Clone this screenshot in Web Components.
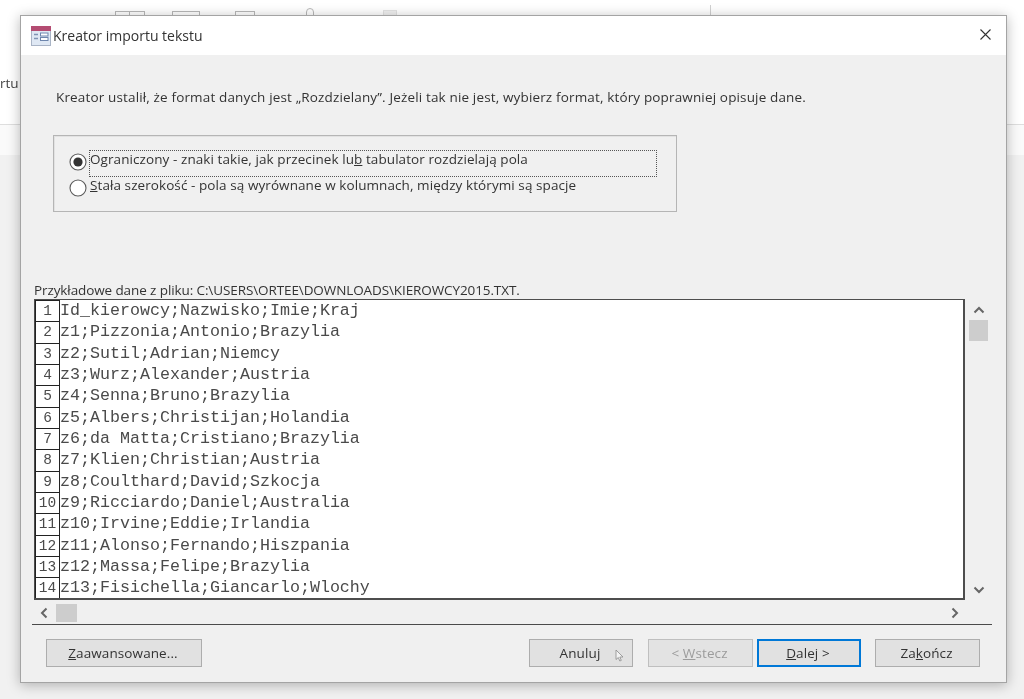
<!DOCTYPE html>
<html lang="pl">
<head>
<meta charset="utf-8">
<title>Kreator importu tekstu</title>
<style>
  html,body{margin:0;height:699px;overflow:hidden;background:#f1f1f1}
  body{font-family:"Open Sans","Noto Sans",sans-serif;color:#333;filter:blur(.35px)}
</style>
</head>
<body>
<app-backdrop></app-backdrop>
<import-dialog heading="Kreator importu tekstu">
  <p slot="intro">Kreator ustalił, że format danych jest „Rozdzielany”. Jeżeli tak nie jest, wybierz format, który poprawniej opisuje dane.</p>
  <group-box slot="format">
    <radio-row checked focused>Ograniczony - znaki takie, jak przecinek lu<u>b</u> tabulator rozdzielają pola</radio-row>
    <radio-row><u>S</u>tała szerokość - pola są wyrównane w kolumnach, między którymi są spacje</radio-row>
  </group-box>
  <sample-table slot="sample" caption="Przykładowe dane z pliku: C:\USERS\ORTEE\DOWNLOADS\KIEROWCY2015.TXT."></sample-table>
  <wizard-button slot="left" w="156"><u>Z</u>aawansowane...</wizard-button>
  <wizard-button slot="right" w="104" pointer>Anuluj</wizard-button>
  <wizard-button slot="right" w="105" disabled style="margin-left:15px">&lt; <u>W</u>stecz</wizard-button>
  <wizard-button slot="right" w="104" primary style="margin-left:4px"><u>D</u>alej &gt;</wizard-button>
  <wizard-button slot="right" w="105" style="margin-left:14px">Za<u>k</u>ończ</wizard-button>
</import-dialog>

<script>
const ROWS = [
  "Id_kierowcy;Nazwisko;Imie;Kraj",
  "z1;Pizzonia;Antonio;Brazylia",
  "z2;Sutil;Adrian;Niemcy",
  "z3;Wurz;Alexander;Austria",
  "z4;Senna;Bruno;Brazylia",
  "z5;Albers;Christijan;Holandia",
  "z6;da Matta;Cristiano;Brazylia",
  "z7;Klien;Christian;Austria",
  "z8;Coulthard;David;Szkocja",
  "z9;Ricciardo;Daniel;Australia",
  "z10;Irvine;Eddie;Irlandia",
  "z11;Alonso;Fernando;Hiszpania",
  "z12;Massa;Felipe;Brazylia",
  "z13;Fisichella;Giancarlo;Wlochy"
];

// the Access window behind the dialog, mostly hidden
class AppBackdrop extends HTMLElement {
  constructor() {
    super();
    this.attachShadow({ mode: "open" }).innerHTML = `
      <style>
        :host{display:block;height:699px;background:#f1f1f1}
        .ribbon{position:relative;height:124px;background:#fff;border-bottom:1px solid #dedede;overflow:hidden}
        .band{height:30px;background:#fafafa}
        .ico{position:absolute;top:11px;height:8px;border:1px solid #b8b8b8;box-sizing:border-box}
        .sep{position:absolute;left:710px;top:5px;width:1px;height:14px;background:#d0d0d0}
        .cut{position:absolute;left:0;top:74px;font-size:13.5px;line-height:18px;color:#444}
      </style>
      <div class="ribbon">
        <div class="ico" style="left:115px;width:15px"></div>
        <div class="ico" style="left:129px;width:16px"></div>
        <div class="ico" style="left:172px;width:28px"></div>
        <div class="ico" style="left:235px;width:20px"></div>
        <div class="ico" style="left:306px;top:8px;width:8px;border-radius:4px 4px 0 0"></div>
        <div class="ico" style="left:383px;top:10px;width:14px;border-color:#e2e2e2;background:#f0f0f0"></div>
        <div class="sep"></div>
        <div class="cut">rtu</div>
      </div>
      <div class="band"></div>`;
  }
}

class ImportDialog extends HTMLElement {
  constructor() {
    super();
    this.attachShadow({ mode: "open" }).innerHTML = `
      <style>
        :host{position:absolute;left:20px;top:15px;width:987px;height:668px;box-sizing:border-box;display:flex;flex-direction:column;
          background:#f0f0f0;border:1px solid #a4a4a4;box-shadow:0 2px 12px rgba(0,0,0,.28)}
        .title{height:39px;flex:none;background:#fff;display:flex;align-items:center;padding:0 14px 0 10px;font-size:14px;color:#333}
        .title svg{display:block;margin-right:2px}
        .title svg.x{margin:-2px 0 0}
        .title span{flex:1}
        .body{flex:1;display:flex;flex-direction:column}
        ::slotted(p){margin:32px 0 28px 35px;font-size:13.5px;letter-spacing:.15px;line-height:20px;font-weight:500;color:#333}
        .rule{height:1px;background:#4a4a4a;margin:2px 14px 14px 11px}
        .actions{display:flex;justify-content:space-between;padding:0 26px 0 25px}
        .right{display:flex}
      </style>
      <div class="title">
        <svg width="20" height="20" viewBox="0 0 20 20">
          <rect x=".5" y=".5" width="19" height="19" fill="#dfe8f4" stroke="#a9b4c6"/>
          <rect x="0" y="0" width="20" height="5" fill="#b44c72"/>
          <path d="M3 8.500h4M3 12.500h4" stroke="#7f93b4" stroke-width="1.4"/>
          <rect x="9.500" y="7" width="7.500" height="3" fill="#fff" stroke="#6e86ad"/>
          <rect x="9.500" y="11.500" width="7.500" height="3" fill="#fff" stroke="#6e86ad"/>
        </svg>
        <span></span>
        <svg class="x" width="13" height="13" viewBox="0 0 13 13"><path d="M1.500 1.500l10 10M11.500 1.500l-10 10" stroke="#333" stroke-width="1.1" fill="none"/></svg>
      </div>
      <div class="body">
        <slot name="intro"></slot>
        <slot name="format"></slot>
        <slot name="sample"></slot>
        <div class="rule"></div>
        <div class="actions">
          <slot name="left"></slot>
          <div class="right"><slot name="right"></slot></div>
        </div>
      </div>`;
  }
  connectedCallback() {
    this.shadowRoot.querySelector(".title span").textContent = this.getAttribute("heading");
  }
}

class GroupBox extends HTMLElement {
  constructor() {
    super();
    this.attachShadow({ mode: "open" }).innerHTML = `
      <style>
        :host{display:block;box-sizing:border-box;width:624px;height:77px;margin-left:32px;padding:14px 19px 0 15px;
          border:1px solid #b5b5b5;box-shadow:1px 1px 0 #e2e2e2 inset}
        ::slotted(:not(:first-child)){margin-top:-1px}
      </style>
      <slot></slot>`;
  }
}

class RadioRow extends HTMLElement {
  constructor() {
    super();
    this.attachShadow({ mode: "open" }).innerHTML = `
      <style>
        :host{display:flex;align-items:flex-start;font-size:13.5px;letter-spacing:.08px;line-height:16px;color:#333;font-weight:500}
        svg{flex:none;margin-top:3px;display:block}
        .label{flex:1;box-sizing:border-box;height:27px;margin-left:2px;border:1px dotted transparent}
        :host([focused]) .label{border-color:#555}
        :host(:not([focused])) .label{height:24px}
      </style>
      <svg width="18" height="18" viewBox="0 0 18 18">
        <circle cx="9" cy="9" r="8" fill="#fff" stroke="#5a5a5a" stroke-width="1.1"/>
        <circle class="dot" cx="9" cy="9" r="4.600" fill="#333"/>
      </svg>
      <div class="label"><slot></slot></div>`;
  }
  connectedCallback() {
    if (!this.hasAttribute("checked")) this.shadowRoot.querySelector(".dot").remove();
  }
}

class SampleTable extends HTMLElement {
  constructor() {
    super();
    this.attachShadow({ mode: "open" }).innerHTML = `
      <style>
        :host{display:block;margin:69px 0 0 13px}
        .cap{font-size:13.5px;line-height:18px;color:#333;letter-spacing:-.1px;font-weight:500}
        .main{display:flex}
        .box{box-sizing:border-box;width:931px;height:301px;background:#fff;border:2px solid #4d4d4d;border-width:1px 2px 2px 1px;
          display:grid;grid-template-columns:25px 1fr;grid-auto-rows:21.35px;overflow:hidden;
          font-family:"Liberation Mono","Courier New",monospace;font-size:16.67px;color:#4a4a4a}
        .n{box-sizing:border-box;border:1px solid #222;margin-bottom:-1px;text-align:center;font-size:14.5px;line-height:21px}
        .r{white-space:pre;line-height:22px}
        .vbar{width:19px;margin-left:4px;display:flex;flex-direction:column;align-items:center}
        .vbar .up{margin-top:7px}
        .vbar .thumb{width:19px;height:21px;background:#cdcdcd;margin-top:6px}
        .vbar .down{margin-top:auto;margin-bottom:6px}
        .hbar{display:flex;align-items:center;width:931px;height:19px;margin-top:3px;box-sizing:border-box;padding-left:6px}
        .hbar .thumb{width:21px;height:18px;background:#cdcdcd;margin-left:8px}
        .hbar .next{margin-left:auto;margin-right:6px}
        svg{display:block}
      </style>
      <div class="cap"></div>
      <div class="main">
        <div class="box"></div>
        <div class="vbar">
          <svg class="up" width="12" height="8" viewBox="0 0 12 8"><path d="M1.500 6.500L6 2l4.500 4.500" fill="none" stroke="#666" stroke-width="2"/></svg>
          <div class="thumb"></div>
          <svg class="down" width="12" height="8" viewBox="0 0 12 8"><path d="M1.500 1.500L6 6l4.500-4.500" fill="none" stroke="#666" stroke-width="2"/></svg>
        </div>
      </div>
      <div class="hbar">
        <svg width="8" height="12" viewBox="0 0 8 12"><path d="M6.500 1.500L2 6l4.500 4.500" fill="none" stroke="#666" stroke-width="2"/></svg>
        <div class="thumb"></div>
        <svg class="next" width="8" height="12" viewBox="0 0 8 12"><path d="M1.500 1.500L6 6l-4.500 4.500" fill="none" stroke="#666" stroke-width="2"/></svg>
      </div>`;
  }
  connectedCallback() {
    const root = this.shadowRoot;
    root.querySelector(".cap").textContent = this.getAttribute("caption");
    root.querySelector(".box").innerHTML = ROWS.map((r, i) =>
      `<div class="n">${i + 1}</div><div class="r">${r}</div>`).join("");
  }
}

class WizardButton extends HTMLElement {
  constructor() {
    super();
    this.attachShadow({ mode: "open" }).innerHTML = `
      <style>
        :host{display:inline-flex;position:relative;align-items:center;justify-content:center;box-sizing:border-box;height:28px;
          background:#e1e1e1;border:1px solid #adadad;font-size:13.5px;letter-spacing:.1px;font-weight:500;color:#333;vertical-align:top}
        :host([primary]){border:2px solid #0078d7}
        :host([disabled]){color:#9c9c9c;border-color:#bfbfbf;background:#e3e3e3}
        span{margin-left:-2px}
        svg{position:absolute;left:85px;top:9px}
      </style>
      <span><slot></slot></span>`;
  }
  connectedCallback() {
    this.style.width = this.getAttribute("w") + "px";
    if (this.hasAttribute("pointer")) {
      this.shadowRoot.innerHTML += `<svg width="9" height="13" viewBox="0 0 9 13"><path d="M1 1v9.500l2.300-2 1.500 3.500 1.500-.6-1.500-3.400H8z" fill="#f4f4f4" stroke="#8a8a8a" stroke-width=".8"/></svg>`;
    }
  }
}

customElements.define("app-backdrop", AppBackdrop);
customElements.define("import-dialog", ImportDialog);
customElements.define("group-box", GroupBox);
customElements.define("radio-row", RadioRow);
customElements.define("sample-table", SampleTable);
customElements.define("wizard-button", WizardButton);
</script>
</body>
</html>
